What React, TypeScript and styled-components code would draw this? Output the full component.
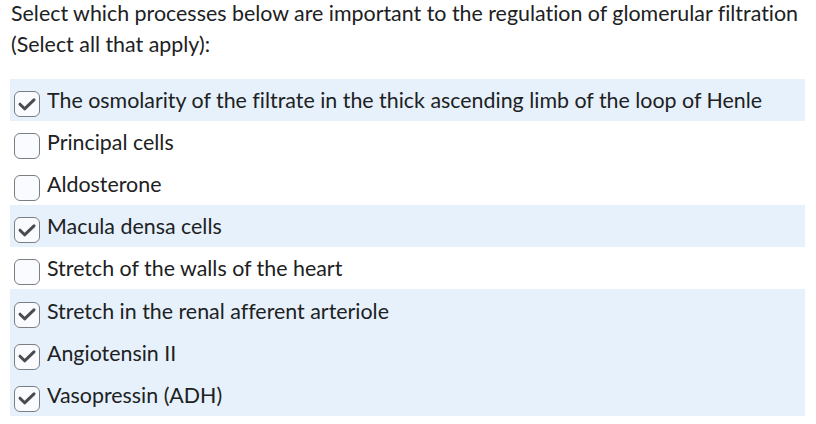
import React from "react";
import styled, { createGlobalStyle } from "styled-components";

const Global = createGlobalStyle`
  html, body { margin: 0; padding: 0; background: #ffffff; }
  body { font-family: Lato, "Open Sans", sans-serif; font-variant-ligatures: none; }
`;

const Page = styled.div`
  width: 816px;
  height: 424px;
  box-sizing: border-box;
  padding: 0 11px 0 10px;
  background: #ffffff;
`;

const Prompt = styled.div`
  font-size: 21.4px;
  line-height: 31px;
  color: #202122;
  padding-left: 1px;
  margin-top: -2px;
  margin-bottom: 19px;
`;

const List = styled.div`
  display: flex;
  flex-direction: column;
`;

const Row = styled.label<{ $checked: boolean }>`
  display: flex;
  align-items: center;
  gap: 7px;
  height: 42.1px;
  padding-left: 4px;
  background: ${(p) => (p.$checked ? "#e6f1fc" : "transparent")};
  font-size: 21.4px;
  color: #202122;
`;

const Label = styled.span``;

const Box = styled.span`
  display: block;
  width: 26px;
  height: 26px;
  margin-top: 8px;
  box-sizing: border-box;
  border: 1.5px solid #7a7f83;
  border-radius: 6px;
  background: #f9fbff;
  flex-shrink: 0;
  position: relative;
`;

const CheckSvg = styled.svg`
  position: absolute;
  left: -1.5px;
  top: -1.5px;
`;

const Check = () => (
  <CheckSvg width="26" height="26" viewBox="0 0 26 26">
    <path d="M6 13.2 L10.6 17.8 L20 8.8" fill="none" stroke="#494c4e" strokeWidth="3" strokeLinecap="round" strokeLinejoin="round" />
  </CheckSvg>
);

const items: [string, boolean][] = [
  ["The osmolarity of the filtrate in the thick ascending limb of the loop of Henle", true],
  ["Principal cells", false],
  ["Aldosterone", false],
  ["Macula densa cells", true],
  ["Stretch of the walls of the heart", false],
  ["Stretch in the renal afferent arteriole", true],
  ["Angiotensin II", true],
  ["Vasopressin (ADH)", true],
];

export default function App() {
  return (
    <Page>
      <Global />
      <Prompt>
        Select which processes below are important to the regulation of glomerular filtration
        <br />
        (Select all that apply):
      </Prompt>
      <List>
        {items.map(([text, checked]) => (
          <Row key={text} $checked={checked}>
            <Box>{checked && <Check />}</Box>
            <Label>{text}</Label>
          </Row>
        ))}
      </List>
    </Page>
  );
}
